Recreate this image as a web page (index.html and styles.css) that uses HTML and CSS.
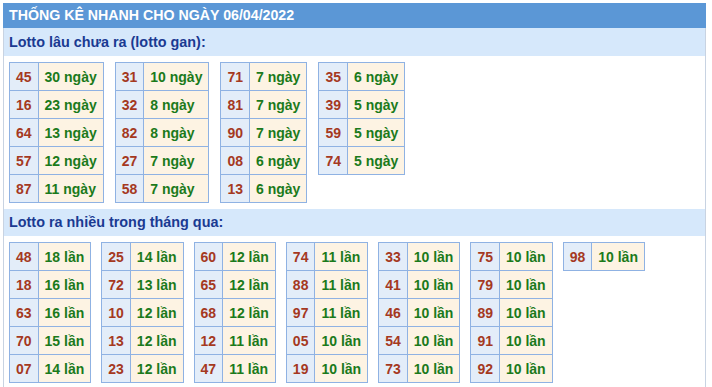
FILE: index.html
```html
<!DOCTYPE html>
<html lang="vi">
<head>
<meta charset="utf-8">
<title>Thống kê nhanh</title>
<link rel="stylesheet" href="styles.css">
</head>
<body>
<div class="box">
  <div class="title">THỐNG KÊ NHANH CHO NGÀY 06/04/2022</div>
  <div class="sub first">Lotto lâu chưa ra (lotto gan):</div>
  <div class="tables">
    <table class="tk"><tbody>
      <tr><td class="n">45</td><td class="v">30 ngày</td></tr>
      <tr><td class="n">16</td><td class="v">23 ngày</td></tr>
      <tr><td class="n">64</td><td class="v">13 ngày</td></tr>
      <tr><td class="n">57</td><td class="v">12 ngày</td></tr>
      <tr><td class="n">87</td><td class="v">11 ngày</td></tr>
    </tbody></table>
    <table class="tk"><tbody>
      <tr><td class="n">31</td><td class="v">10 ngày</td></tr>
      <tr><td class="n">32</td><td class="v">8 ngày</td></tr>
      <tr><td class="n">82</td><td class="v">8 ngày</td></tr>
      <tr><td class="n">27</td><td class="v">7 ngày</td></tr>
      <tr><td class="n">58</td><td class="v">7 ngày</td></tr>
    </tbody></table>
    <table class="tk"><tbody>
      <tr><td class="n">71</td><td class="v">7 ngày</td></tr>
      <tr><td class="n">81</td><td class="v">7 ngày</td></tr>
      <tr><td class="n">90</td><td class="v">7 ngày</td></tr>
      <tr><td class="n">08</td><td class="v">6 ngày</td></tr>
      <tr><td class="n">13</td><td class="v">6 ngày</td></tr>
    </tbody></table>
    <table class="tk"><tbody>
      <tr><td class="n">35</td><td class="v">6 ngày</td></tr>
      <tr><td class="n">39</td><td class="v">5 ngày</td></tr>
      <tr><td class="n">59</td><td class="v">5 ngày</td></tr>
      <tr><td class="n">74</td><td class="v">5 ngày</td></tr>
    </tbody></table>
  </div>
  <div class="sub second">Lotto ra nhiều trong tháng qua:</div>
  <div class="tables narrow">
    <table class="tk"><tbody>
      <tr><td class="n">48</td><td class="v">18 lần</td></tr>
      <tr><td class="n">18</td><td class="v">16 lần</td></tr>
      <tr><td class="n">63</td><td class="v">16 lần</td></tr>
      <tr><td class="n">70</td><td class="v">15 lần</td></tr>
      <tr><td class="n">07</td><td class="v">14 lần</td></tr>
    </tbody></table>
    <table class="tk"><tbody>
      <tr><td class="n">25</td><td class="v">14 lần</td></tr>
      <tr><td class="n">72</td><td class="v">13 lần</td></tr>
      <tr><td class="n">10</td><td class="v">12 lần</td></tr>
      <tr><td class="n">13</td><td class="v">12 lần</td></tr>
      <tr><td class="n">23</td><td class="v">12 lần</td></tr>
    </tbody></table>
    <table class="tk"><tbody>
      <tr><td class="n">60</td><td class="v">12 lần</td></tr>
      <tr><td class="n">65</td><td class="v">12 lần</td></tr>
      <tr><td class="n">68</td><td class="v">12 lần</td></tr>
      <tr><td class="n">12</td><td class="v">11 lần</td></tr>
      <tr><td class="n">47</td><td class="v">11 lần</td></tr>
    </tbody></table>
    <table class="tk"><tbody>
      <tr><td class="n">74</td><td class="v">11 lần</td></tr>
      <tr><td class="n">88</td><td class="v">11 lần</td></tr>
      <tr><td class="n">97</td><td class="v">11 lần</td></tr>
      <tr><td class="n">05</td><td class="v">10 lần</td></tr>
      <tr><td class="n">19</td><td class="v">10 lần</td></tr>
    </tbody></table>
    <table class="tk"><tbody>
      <tr><td class="n">33</td><td class="v">10 lần</td></tr>
      <tr><td class="n">41</td><td class="v">10 lần</td></tr>
      <tr><td class="n">46</td><td class="v">10 lần</td></tr>
      <tr><td class="n">54</td><td class="v">10 lần</td></tr>
      <tr><td class="n">73</td><td class="v">10 lần</td></tr>
    </tbody></table>
    <table class="tk"><tbody>
      <tr><td class="n">75</td><td class="v">10 lần</td></tr>
      <tr><td class="n">79</td><td class="v">10 lần</td></tr>
      <tr><td class="n">89</td><td class="v">10 lần</td></tr>
      <tr><td class="n">91</td><td class="v">10 lần</td></tr>
      <tr><td class="n">92</td><td class="v">10 lần</td></tr>
    </tbody></table>
    <table class="tk"><tbody>
      <tr><td class="n">98</td><td class="v">10 lần</td></tr>
    </tbody></table>
  </div>
</div>
</body>
</html>
```
FILE: styles.css
```css
html, body {
  margin: 0;
  padding: 0;
  background: #ffffff;
}
body {
  padding: 3px 0 0 3px;
  font-family: "Liberation Sans", Arial, sans-serif;
  font-size: 14px;
  font-weight: bold;
}
.box {
  width: 701px;
  border: 1px solid #c8d3e2;
  border-top: none;
  border-bottom: none;
  padding-bottom: 0;
}
.title {
  height: 25px;
  line-height: 25px;
  background: #5b97d6;
  color: #ffffff;
  margin: 0 -1px;
  padding-left: 6px;
  font-size: 14.2px;
}
.sub {
  background: #d6e8fb;
  color: #1a3a92;
  padding-left: 5px;
  height: 27px;
  line-height: 27px;
  font-size: 14.4px;
}
.sub.first {
  height: 28px;
  line-height: 28px;
}
.tables {
  display: flex;
  align-items: flex-start;
  gap: 11px;
  padding: 6px 5px;
}
.tables.narrow {
  gap: 10px;
  padding-bottom: 4px;
}
.tk {
  border-collapse: collapse;
}
.tk td {
  border: 1px solid #8fb2e3;
  height: 28px;
  padding: 0 6px;
  white-space: nowrap;
  box-sizing: border-box;
}
.tk .n {
  background: #e3edf9;
  color: #a5391f;
  text-align: center;
}
.tk .v {
  background: #fdf3e3;
  color: #1b7a1b;
}
```
